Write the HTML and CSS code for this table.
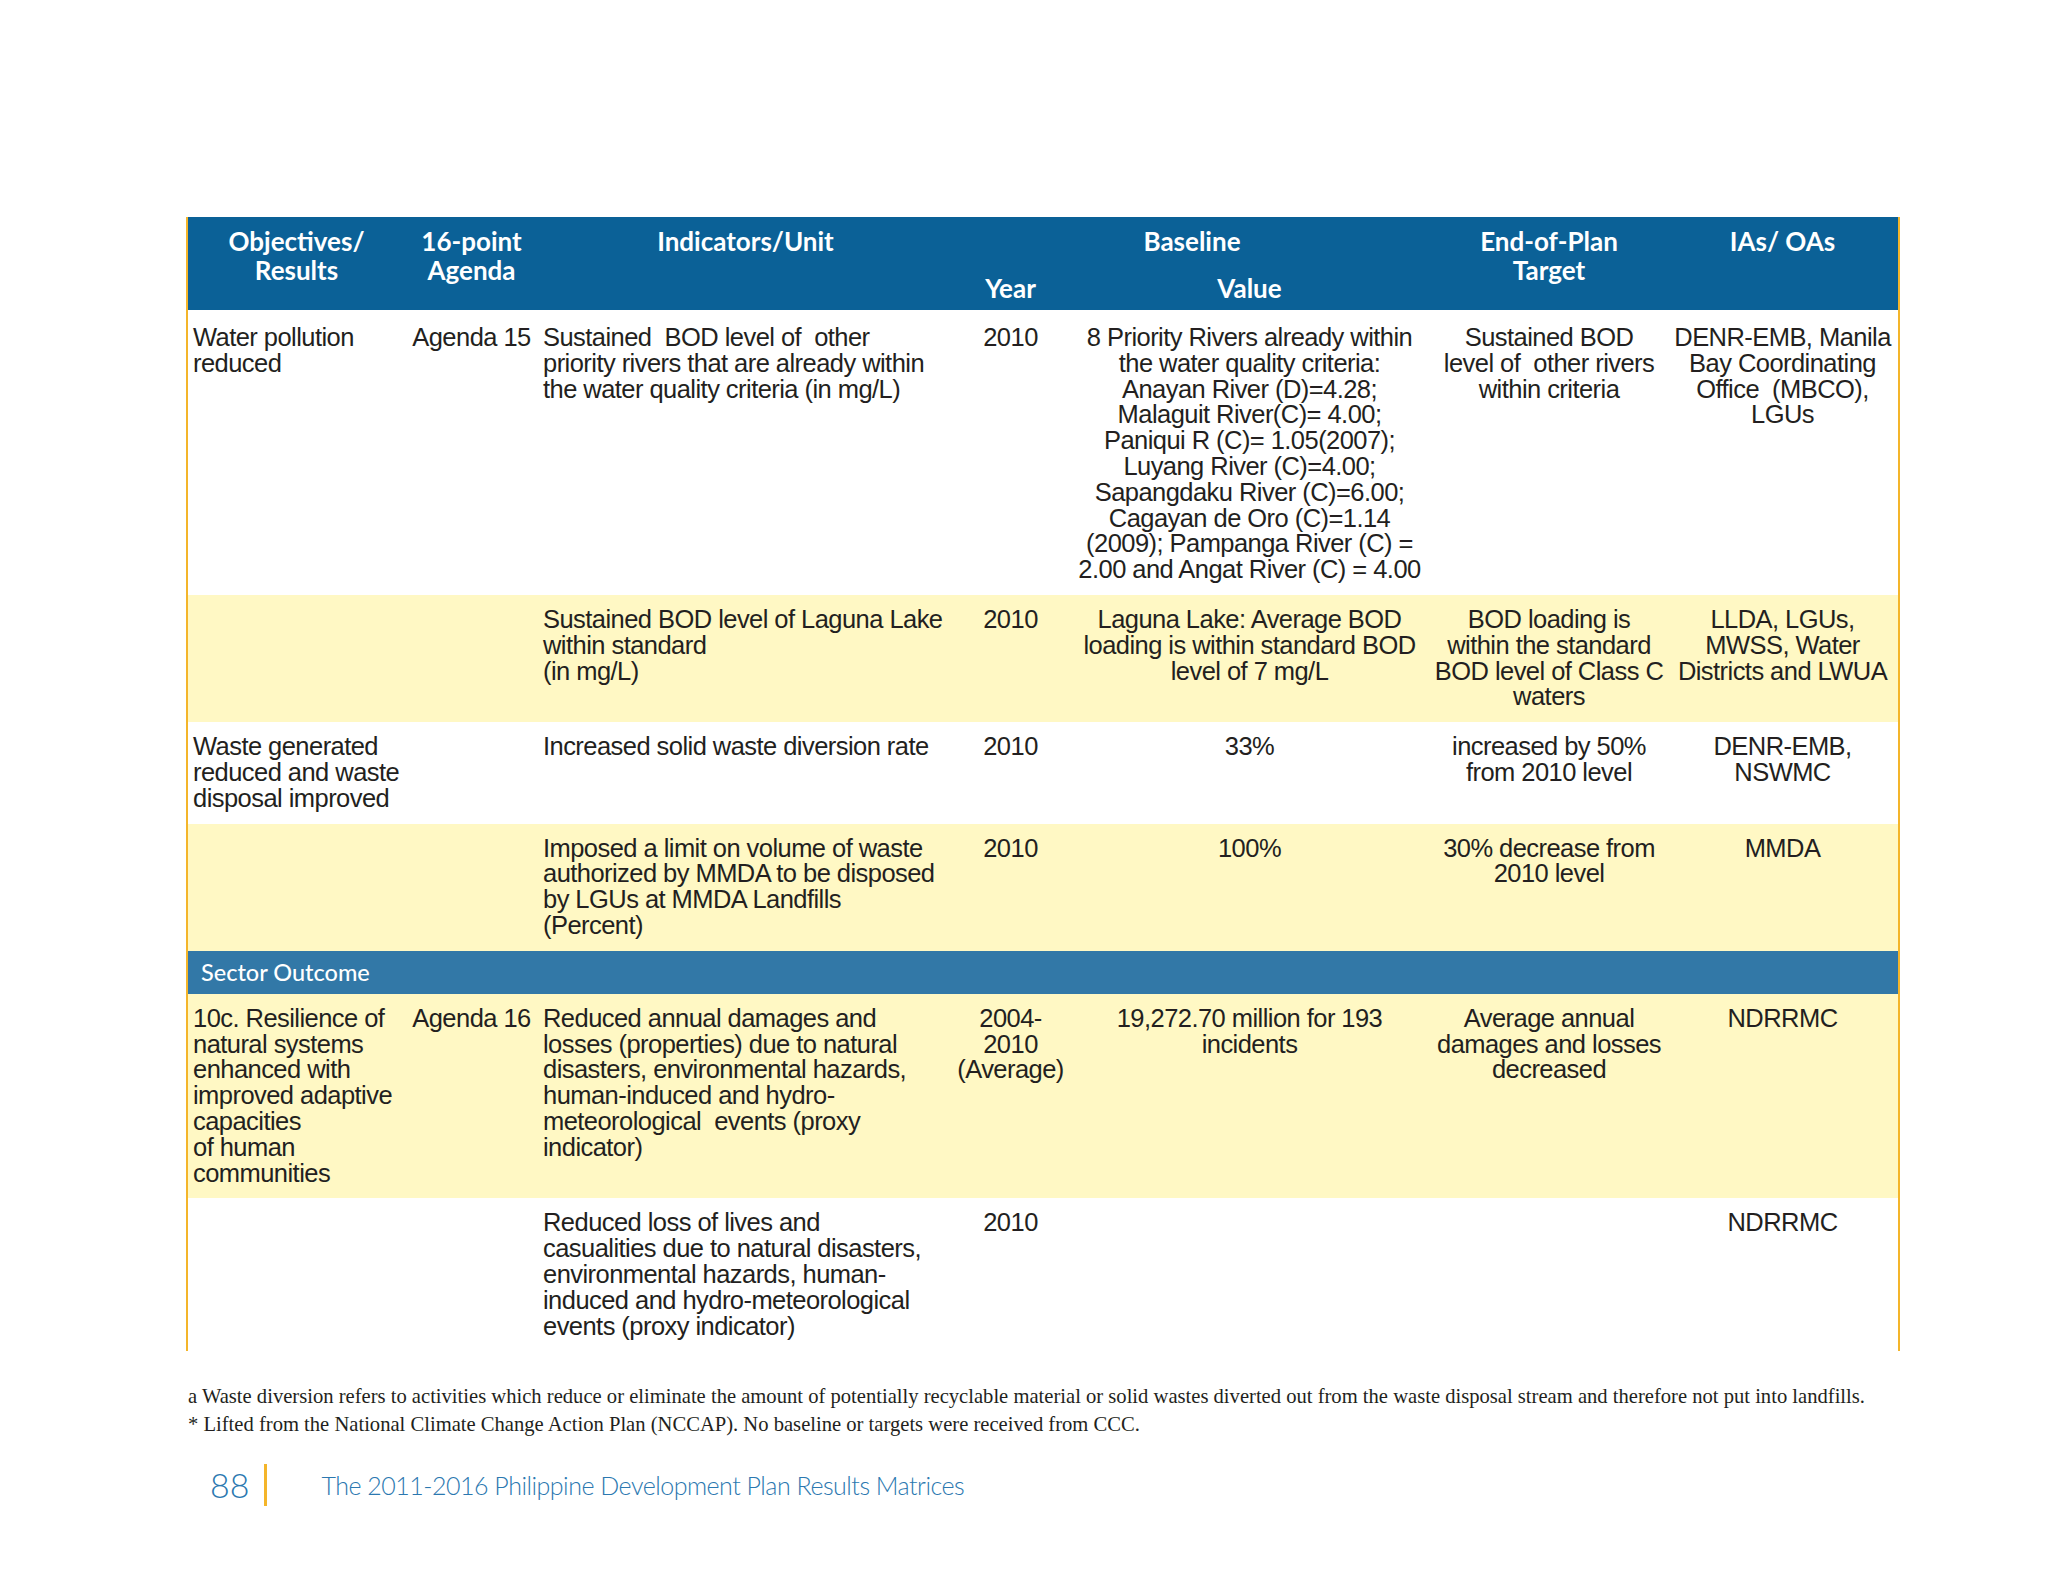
FILE: index.html
```html
<!DOCTYPE html>
<html>
<head>
<meta charset="utf-8">
<link rel="stylesheet" href="styles.css">
</head>
<body>
<div class="page">
  <table class="matrix">
    <colgroup>
      <col class="c1"><col class="c2"><col class="c3"><col class="c4"><col class="c5"><col class="c6"><col class="c7">
    </colgroup>
    <thead>
      <tr>
        <th rowspan="2">Objectives/<br>Results</th>
        <th rowspan="2">16-point<br>Agenda</th>
        <th rowspan="2">Indicators/Unit</th>
        <th colspan="2" class="top">Baseline</th>
        <th rowspan="2">End-of-Plan<br>Target</th>
        <th rowspan="2">IAs/ OAs</th>
      </tr>
      <tr>
        <th class="sub">Year</th>
        <th class="sub">Value</th>
      </tr>
    </thead>
    <tbody>
      <tr class="white first">
        <td class="l">Water pollution<br>reduced</td>
        <td class="c">Agenda 15</td>
        <td class="l">Sustained&nbsp; BOD level of&nbsp; other<br>priority rivers that are already within<br>the water quality criteria (in mg/L)</td>
        <td class="c">2010</td>
        <td class="c">8 Priority Rivers already within<br>the water quality criteria:<br>Anayan River (D)=4.28;<br>Malaguit River(C)= 4.00;<br>Paniqui R (C)= 1.05(2007);<br>Luyang River (C)=4.00;<br>Sapangdaku River (C)=6.00;<br>Cagayan de Oro (C)=1.14<br>(2009); Pampanga River (C) =<br>2.00 and Angat River (C) = 4.00</td>
        <td class="c">Sustained BOD<br>level of&nbsp; other rivers<br>within criteria</td>
        <td class="c">DENR-EMB, Manila<br>Bay Coordinating<br>Office&nbsp; (MBCO),<br>LGUs</td>
      </tr>
      <tr class="yellow">
        <td class="l"></td>
        <td class="c"></td>
        <td class="l">Sustained BOD level of Laguna Lake<br>within standard<br>(in mg/L)</td>
        <td class="c">2010</td>
        <td class="c">Laguna Lake: Average BOD<br>loading is within standard BOD<br>level of 7 mg/L</td>
        <td class="c">BOD loading is<br>within the standard<br>BOD level of Class C<br>waters</td>
        <td class="c">LLDA, LGUs,<br>MWSS, Water<br>Districts and LWUA</td>
      </tr>
      <tr class="white">
        <td class="l">Waste generated<br>reduced and waste<br>disposal improved</td>
        <td class="c"></td>
        <td class="l">Increased solid waste diversion rate</td>
        <td class="c">2010</td>
        <td class="c">33%</td>
        <td class="c">increased by 50%<br>from 2010 level</td>
        <td class="c">DENR-EMB,<br>NSWMC</td>
      </tr>
      <tr class="yellow">
        <td class="l"></td>
        <td class="c"></td>
        <td class="l">Imposed a limit on volume of waste<br>authorized by MMDA to be disposed<br>by LGUs at MMDA Landfills<br>(Percent)</td>
        <td class="c">2010</td>
        <td class="c">100%</td>
        <td class="c">30% decrease from<br>2010 level</td>
        <td class="c">MMDA</td>
      </tr>
      <tr class="sector">
        <td colspan="7">Sector Outcome</td>
      </tr>
      <tr class="yellow">
        <td class="l">10c. Resilience of<br>natural systems<br>enhanced with<br>improved adaptive<br>capacities<br>of human<br>communities</td>
        <td class="c">Agenda 16</td>
        <td class="l">Reduced annual damages and<br>losses (properties) due to natural<br>disasters, environmental hazards,<br>human-induced and hydro-<br>meteorological&nbsp; events (proxy<br>indicator)</td>
        <td class="c">2004-<br>2010<br>(Average)</td>
        <td class="c">19,272.70 million for 193<br>incidents</td>
        <td class="c">Average annual<br>damages and losses<br>decreased</td>
        <td class="c">NDRRMC</td>
      </tr>
      <tr class="white">
        <td class="l"></td>
        <td class="c"></td>
        <td class="l">Reduced loss of lives and<br>casualities due to natural disasters,<br>environmental hazards, human-<br>induced and hydro-meteorological<br>events (proxy indicator)</td>
        <td class="c">2010</td>
        <td class="c"></td>
        <td class="c"></td>
        <td class="c">NDRRMC</td>
      </tr>
    </tbody>
  </table>

  <div class="notes">
    <p>a Waste diversion refers to activities which reduce or eliminate the amount of potentially recyclable material or solid wastes diverted out from the waste disposal stream and therefore not put into landfills.</p>
    <p>* Lifted from the National Climate Change Action Plan (NCCAP). No baseline or targets were received from CCC.</p>
  </div>

  <div class="footer">
    <span class="pnum">88</span>
    <span class="bar"></span>
    <span class="title">The 2011-2016 Philippine Development Plan Results Matrices</span>
  </div>
</div>
</body>
</html>
```

FILE: styles.css
```css
html, body {
  margin: 0;
  padding: 0;
  background: #ffffff;
}

.page {
  width: 2048px;
  height: 1582px;
  box-sizing: border-box;
  padding: 217px 0 0 186px;
}

.matrix {
  width: 1714px;
  table-layout: fixed;
  border-collapse: separate;
  border-spacing: 0;
  border-left: 2px solid #f4b52a;
  border-right: 2px solid #f4b52a;
}

.c1 { width: 217px; }
.c2 { width: 133px; }
.c3 { width: 415px; }
.c4 { width: 115px; }
.c5 { width: 363px; }
.c6 { width: 236px; }
.c7 { width: 231px; }

.matrix th {
  background: #0b6197;
  color: #ffffff;
  font-family: "Lato", "Liberation Sans", sans-serif;
  font-weight: 700;
  font-size: 26px;
  line-height: 28.5px;
  text-align: center;
  vertical-align: top;
  padding: 10px 2px 0 2px;
}

.matrix th.top {
  padding: 10px 2px 8px 2px;
}

.matrix th.sub {
  padding: 10px 2px 8px 2px;
}

.matrix td {
  font-family: "Liberation Sans", Arial, sans-serif;
  font-size: 25.5px;
  letter-spacing: -0.55px;
  line-height: 25.8px;
  color: #231f20;
  vertical-align: top;
  padding: 12px 3px 12px 5px;
  white-space: nowrap;
}

.matrix tr.first td {
  padding-top: 15px;
}

.matrix td.l { text-align: left; }
.matrix td.c { text-align: center; padding-left: 2px; padding-right: 2px; }

.white td { background: #ffffff; }
.yellow td { background: #fff8c4; }

.matrix .sector td {
  background: #3278a7;
  color: #ffffff;
  font-family: "Lato", "Liberation Sans", sans-serif;
  font-weight: 500;
  font-size: 23.5px;
  letter-spacing: 0;
  line-height: 27px;
  padding: 8px 13px 8px 13px;
}

.notes {
  margin-top: 31px;
  padding-left: 2px;
  font-family: "Liberation Serif", "Times New Roman", serif;
  font-size: 20.6px;
  line-height: 28px;
  color: #231f20;
}

.notes p {
  margin: 0;
  white-space: nowrap;
}

.footer {
  display: flex;
  align-items: center;
  margin-top: 26px;
  padding-left: 24px;
  height: 42px;
}

.pnum {
  font-family: "Lato", "Liberation Sans", sans-serif;
  font-weight: 300;
  font-size: 34px;
  color: #2b78b0;
  line-height: 42px;
}

.bar {
  width: 3px;
  height: 42px;
  background: #f4b52a;
  margin-left: 15px;
  margin-right: 54px;
}

.title {
  font-family: "Lato", "Liberation Sans", sans-serif;
  font-weight: 300;
  font-size: 25px;
  letter-spacing: -0.5px;
  color: #2b78b0;
  line-height: 42px;
}
```
